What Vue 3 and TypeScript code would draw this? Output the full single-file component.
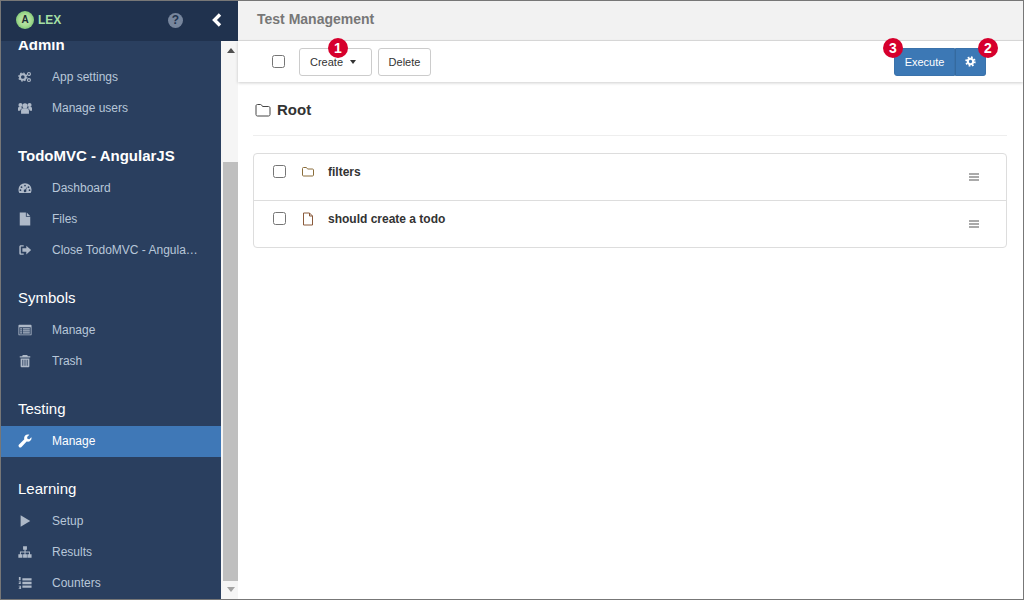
<script setup lang="ts">
interface NavItem {
  label: string
  icon: string
  active?: boolean
}

interface NavGroup {
  title: string
  strong?: boolean
  items: NavItem[]
}

const groups: NavGroup[] = [
  {
    title: 'Admin',
    strong: true,
    items: [
      { label: 'App settings', icon: 'cogs' },
      { label: 'Manage users', icon: 'users' }
    ]
  },
  {
    title: 'TodoMVC - AngularJS',
    strong: true,
    items: [
      { label: 'Dashboard', icon: 'dashboard' },
      { label: 'Files', icon: 'file' },
      { label: 'Close TodoMVC - AngularJS', icon: 'signout' }
    ]
  },
  {
    title: 'Symbols',
    items: [
      { label: 'Manage', icon: 'listalt' },
      { label: 'Trash', icon: 'trash' }
    ]
  },
  {
    title: 'Testing',
    items: [{ label: 'Manage', icon: 'wrench', active: true }]
  },
  {
    title: 'Learning',
    items: [
      { label: 'Setup', icon: 'play' },
      { label: 'Results', icon: 'sitemap' },
      { label: 'Counters', icon: 'listol' }
    ]
  }
]

const tests = [
  { name: 'filters', folder: true },
  { name: 'should create a todo', folder: false }
]
</script>

<template>
  <div class="app">
    <header class="brand-bar">
      <div class="logo">
        <span class="logo-mark">A</span>
        <span class="logo-text">LEX</span>
      </div>
      <span class="help">?</span>
      <svg class="collapse" viewBox="0 0 10 14" width="10" height="14">
        <path d="M8 1.500 2.500 7 8 12.500" fill="none" stroke="#fff" stroke-width="3.400" />
      </svg>
    </header>

    <div class="body">
      <aside class="sidebar">
        <nav class="nav">
          <section v-for="group in groups" :key="group.title" class="group">
            <h3 :class="{ strong: group.strong }">{{ group.title }}</h3>
            <a v-for="item in group.items" :key="item.label" class="item" :class="{ active: item.active }">
              <svg class="item-icon" viewBox="0 0 16 16" width="16" height="16" fill="currentColor">
                <template v-if="item.icon === 'cogs'">
                  <circle cx="5.500" cy="8" r="3.200" fill="none" stroke="currentColor" stroke-width="2.200" />
                  <circle cx="5.500" cy="8" r="4.600" fill="none" stroke="currentColor" stroke-width="1.400" stroke-dasharray="1.800 1.800" />
                  <circle cx="12.500" cy="4.500" r="1.700" fill="none" stroke="currentColor" stroke-width="1.300" />
                  <circle cx="12.500" cy="11.500" r="1.700" fill="none" stroke="currentColor" stroke-width="1.300" />
                </template>
                <template v-else-if="item.icon === 'users'">
                  <circle cx="8" cy="5.500" r="3" />
                  <circle cx="2.800" cy="4.500" r="2.300" />
                  <circle cx="13.200" cy="4.500" r="2.300" />
                  <path d="M3.500 14.500V11c0-1.800 1.200-2.800 2.200-2.800h4.600c1 0 2.200 1 2.200 2.800v3.500z" />
                  <path d="M0 11V8.500c0-1.300.8-2 1.800-2h1.600c.4.800 1 1.300 1.400 1.700C3.400 8.800 2.600 10 2.600 11zM16 11V8.500c0-1.300-.8-2-1.800-2h-1.600c-.4.800-1 1.300-1.400 1.700 1.400.6 2.200 1.800 2.200 2.800z" />
                </template>
                <template v-else-if="item.icon === 'dashboard'">
                  <path fill-rule="evenodd" d="M8 2.500a7.500 7.500 0 0 1 7.500 7.500c0 1.500-.4 2.800-1 3.800H1.500C.9 12.800.5 11.500.5 10A7.500 7.500 0 0 1 8 2.500zM8 4.200a1 1 0 1 0 0 2 1 1 0 0 0 0-2zM4 6a1 1 0 1 0 0 2 1 1 0 0 0 0-2zM12 6a1 1 0 1 0 0 2 1 1 0 0 0 0-2zM2.800 9.500a1 1 0 1 0 0 2 1 1 0 0 0 0-2zM13.200 9.500a1 1 0 1 0 0 2 1 1 0 0 0 0-2zM10.500 6.500 8.300 9.700a1.500 1.500 0 1 0 1 .6z" />
                </template>
                <template v-else-if="item.icon === 'file'">
                  <path d="M2 .5h7v5h5v10H2zM10 .7 13.800 4.500H10z" />
                </template>
                <template v-else-if="item.icon === 'signout'">
                  <path d="M6.500 2.500H3.300c-1.100 0-1.800.7-1.800 1.800v7.400c0 1.100.7 1.800 1.800 1.800h3.200v-1.600H3.700c-.3 0-.5-.2-.5-.5V4.600c0-.3.2-.5.500-.5h2.800z" />
                  <path d="M9.500 3 15 8l-5.500 5v-3H5V6h4.500z" />
                </template>
                <template v-else-if="item.icon === 'listalt'">
                  <path fill-rule="evenodd" d="M1.500 2h13c.6 0 1 .4 1 1v10c0 .6-.4 1-1 1h-13c-.6 0-1-.4-1-1V3c0-.6.4-1 1-1zM1.500 4.800v8.200h13V4.800zM2.500 6h2v1.400h-2zM5.500 6h8v1.400h-8zM2.500 8.300h2v1.400h-2zM5.500 8.300h8v1.400h-8zM2.500 10.600h2V12h-2zM5.500 10.600h8V12h-8z" />
                </template>
                <template v-else-if="item.icon === 'trash'">
                  <path fill-rule="evenodd" d="M5.500 1h5l.8 1.500h2.700v1.500H2V2.500h2.700zM3 5h10v9c0 .6-.4 1-1 1H4c-.6 0-1-.4-1-1zM5 6.500V13.500h1V6.500zM7.500 6.500V13.500h1V6.500zM10 6.500V13.500h1V6.500z" />
                </template>
                <template v-else-if="item.icon === 'wrench'">
                  <path d="M15.500 4.600c0 2.300-1.900 4.200-4.200 4.200-.5 0-1-.1-1.400-.2L4 14.800c-.8.800-2.100.8-2.800 0-.8-.8-.8-2 0-2.800l6-6c-.2-.4-.2-.9-.2-1.300C7 2.100 8.900.5 11.200.5c.7 0 1.300.1 1.800.4L10.400 3.500l.5 2.100 2.100.5 2.200-2.500c.2.300.3.600.3 1z" />
                </template>
                <template v-else-if="item.icon === 'play'">
                  <path d="M3 1.500 14 8 3 14.500z" />
                </template>
                <template v-else-if="item.icon === 'sitemap'">
                  <path d="M5.800 1.500h4.400v4H8.700v2h5v3h1.800v4h-4.800v-4h1.800V8.700H8.600v1.800h1.600v4H5.800v-4h1.600V8.700H3.300v1.800h1.800v4H.4v-4h1.800v-3h5.200v-2H5.800z" />
                </template>
                <template v-else-if="item.icon === 'listol'">
                  <path d="M5 2.500h10.500v2.600H5zM5 6.700h10.500v2.600H5zM5 10.900h10.500v2.600H5zM1 1h2v3.800H1zM.8 6.200h2.700v1L2 8.300h1.500v.9H.8v-1l1.500-1.100H.8zM.8 11h2.700v3.800H.8V14h1.800v-.7H1.300v-.7h1.300v-.7H.8z" />
                </template>
              </svg>
              <span class="item-label">{{ item.label }}</span>
            </a>
          </section>
        </nav>
      </aside>

      <div class="scrollbar">
        <span class="arrow up"></span>
        <span class="thumb"></span>
        <span class="arrow down"></span>
      </div>

      <main class="main">
        <div class="page-title">Test Management</div>

        <div class="toolbar">
          <input class="check" type="checkbox" />
          <button class="btn create">
            Create<span class="caret"></span>
            <span class="badge badge-1">1</span>
          </button>
          <button class="btn delete">Delete</button>
          <div class="execute">
            <button class="btn primary run">
              Execute
              <span class="badge badge-3">3</span>
            </button>
            <button class="btn primary gear">
              <svg viewBox="0 0 16 16" width="11" height="11">
                <circle cx="8" cy="8" r="3.900" fill="none" stroke="#fff" stroke-width="3" />
                <circle cx="8" cy="8" r="6.300" fill="none" stroke="#fff" stroke-width="2.600" stroke-dasharray="2.500 2.450" />
              </svg>
              <span class="badge badge-2">2</span>
            </button>
          </div>
        </div>

        <div class="content">
          <h2 class="crumb">
            <svg viewBox="0 0 16 14" width="16" height="14">
              <path d="M1 3c0-1 .6-1.500 1.500-1.500h3c.8 0 1 .5 1.300 1 .2.500.5 1 1.200 1h5.500c.9 0 1.500.6 1.500 1.500v6.500c0 .9-.6 1.500-1.500 1.500h-11C1.600 13 1 12.400 1 11.500z" fill="none" stroke="#444" stroke-width="1" />
            </svg>
            Root
          </h2>

          <ul class="tests">
            <li v-for="test in tests" :key="test.name" class="test">
              <input class="check" type="checkbox" />
              <svg v-if="test.folder" class="test-icon" viewBox="0 0 14 14" width="14" height="14">
                <path d="M1.500 3.500c0-.7.400-1 1-1h2.500c.6 0 .8.300 1 .7.200.400.400.8 1 .8h4.500c.6 0 1 .4 1 1v5c0 .6-.4 1-1 1h-9c-.6 0-1-.4-1-1z" fill="none" stroke="#8a6d3b" />
              </svg>
              <svg v-else class="test-icon" viewBox="0 0 14 14" width="14" height="14">
                <path d="M2.500 1h6l3 3v9h-9zM8.500 1v3h3" fill="none" stroke="#8a5a3b" />
              </svg>
              <span class="test-name">{{ test.name }}</span>
              <span class="bars"><i></i><i></i><i></i></span>
            </li>
          </ul>
        </div>
      </main>
    </div>
  </div>
</template>

<style>
html,
body {
  margin: 0;
  background: #fff;
}
</style>

<style scoped>
.app {
  width: 1024px;
  height: 600px;
  box-sizing: border-box;
  border: 1px solid #777;
  display: flex;
  flex-direction: column;
  overflow: hidden;
  position: relative;
  font-family: "Liberation Sans", Arial, sans-serif;
  font-size: 12px;
  color: #333;
}

.brand-bar {
  position: absolute;
  top: 0;
  left: 0;
  z-index: 2;
  width: 237px;
  height: 40px;
  background: #20324e;
  display: flex;
  align-items: center;
  padding: 0 0 2px 15px;
  box-sizing: border-box;
}

.logo {
  display: flex;
  align-items: center;
  gap: 4px;
  width: 152px;
}

.logo-mark {
  width: 18px;
  height: 18px;
  border-radius: 50%;
  background: radial-gradient(circle, #bfe6ab 0, #aadd96 45%, #5cb85a 100%);
  color: #1d2d33;
  font-size: 10px;
  font-weight: 700;
  line-height: 18px;
  text-align: center;
}

.logo-text {
  color: #a4dfa4;
  font-size: 12px;
  font-weight: 700;
}

.help {
  width: 15px;
  height: 15px;
  border-radius: 50%;
  background: #77869d;
  color: #20324e;
  font-size: 12px;
  font-weight: 700;
  line-height: 15px;
  text-align: center;
}

.collapse {
  margin-left: 29px;
}

.body {
  flex: 1;
  display: flex;
  min-height: 0;
}

.sidebar {
  width: 220px;
  flex: none;
  background: #2a3f5f;
  overflow: hidden;
}

.nav {
  margin-top: 28px;
}

.group h3 {
  margin: 16px 0 0;
  padding-left: 17px;
  height: 33px;
  line-height: 31px;
  color: #fff;
  font-size: 15px;
  font-weight: 400;
}

.group h3.strong {
  font-weight: 700;
}

.item {
  height: 31px;
  box-sizing: border-box;
  display: flex;
  align-items: center;
  padding: 0 0 2px 17px;
  color: #b8c7d9;
}

.item.active {
  background: #3f78b7;
  color: #fff;
}

.item-icon {
  flex: none;
  width: 14px;
  height: 14px;
  margin-right: 20px;
  color: #aeb9c8;
}

.item.active .item-icon {
  color: #fff;
}

.item-label {
  width: 148px;
  white-space: nowrap;
  overflow: hidden;
  text-overflow: ellipsis;
}

.scrollbar {
  width: 17px;
  flex: none;
  box-sizing: border-box;
  padding-left: 2px;
  background: #f5f5f5;
  display: flex;
  flex-direction: column;
  align-items: center;
}

.thumb {
  flex: 1;
  align-self: stretch;
  background: #bfbfbf;
  margin: 109px 0 0;
}

.arrow {
  width: 0;
  height: 0;
  border-left: 4px solid transparent;
  border-right: 4px solid transparent;
}

.arrow.up {
  margin-top: 47px;
  border-bottom: 5px solid #505050;
}

.arrow.down {
  margin: 6px 0 7px;
  border-top: 5px solid #a3a3a3;
}

.main {
  flex: 1;
  min-width: 0;
  display: flex;
  flex-direction: column;
  background: #fff;
}

.page-title {
  height: 39px;
  flex: none;
  line-height: 37px;
  padding-left: 19px;
  background: #f2f2f2;
  border-bottom: 1px solid #ddd;
  color: #777;
  font-size: 14px;
  font-weight: 700;
}

.toolbar {
  height: 41px;
  flex: none;
  box-sizing: border-box;
  display: flex;
  align-items: center;
  padding: 0 37px 0 34px;
  box-shadow: 0 1px 3px rgba(0, 0, 0, 0.2);
  position: relative;
  z-index: 1;
}

.toolbar .check {
  margin: 0 14px 0 0;
}

.check {
  width: 13px;
  height: 13px;
  margin: 0;
  flex: none;
}

.btn {
  height: 28px;
  box-sizing: border-box;
  margin-right: 6px;
  padding: 0 10px;
  border: 1px solid #ccc;
  border-radius: 3px;
  background: #fff;
  color: #333;
  font: 11px "Liberation Sans", Arial, sans-serif;
  position: relative;
}

.create {
  width: 73px;
  text-align: left;
}

.delete {
  width: 53px;
  padding: 0;
}

.caret {
  display: inline-block;
  margin-left: 7px;
  vertical-align: 2px;
  border-top: 4px solid #333;
  border-left: 3.5px solid transparent;
  border-right: 3.5px solid transparent;
}

.execute {
  margin-left: auto;
  display: flex;
}

.primary {
  margin: 0;
  background: #3c78b5;
  border-color: #3a72ab;
  color: #fff;
}

.run {
  width: 61px;
  padding: 0;
  border-radius: 3px 0 0 3px;
  font-weight: 400;
}

.gear {
  width: 31px;
  padding: 0;
  border-left-color: #346a9f;
  border-radius: 0 3px 3px 0;
  display: flex;
  align-items: center;
  justify-content: center;
}

.badge {
  position: absolute;
  top: -11px;
  width: 20px;
  height: 20px;
  border-radius: 50%;
  background: #d6002d;
  color: #fff;
  font-size: 14px;
  font-weight: 700;
  line-height: 20px;
  text-align: center;
}

.badge-1 {
  left: 28px;
}

.badge-3 {
  left: -12px;
}

.badge-2 {
  right: -13px;
}

.content {
  flex: 1;
  padding: 0 16px 0 15px;
}

.crumb {
  margin: 0;
  height: 54px;
  box-sizing: border-box;
  padding: 2px 0 0 2px;
  display: flex;
  align-items: center;
  gap: 6px;
  border-bottom: 1px solid #eee;
  color: #333;
  font-size: 15px;
  font-weight: 700;
}

.tests {
  list-style: none;
  margin: 17px 0 0;
  padding: 0;
  border: 1px solid #ddd;
  border-radius: 4px;
}

.test {
  height: 46px;
  box-sizing: border-box;
  display: flex;
  align-items: flex-start;
  padding: 11px 27px 0 19px;
  font-weight: 700;
}

.test + .test {
  height: 47px;
  border-top: 1px solid #ddd;
}

.test-icon {
  margin: 0 0 0 15px;
  flex: none;
}

.test-name {
  margin-left: 13px;
  line-height: 14px;
}

.bars {
  margin: 8px 0 0 auto;
  width: 10px;
  display: flex;
  flex-direction: column;
  gap: 1px;
}

.bars i {
  height: 2px;
  background: #aaa;
}
</style>
